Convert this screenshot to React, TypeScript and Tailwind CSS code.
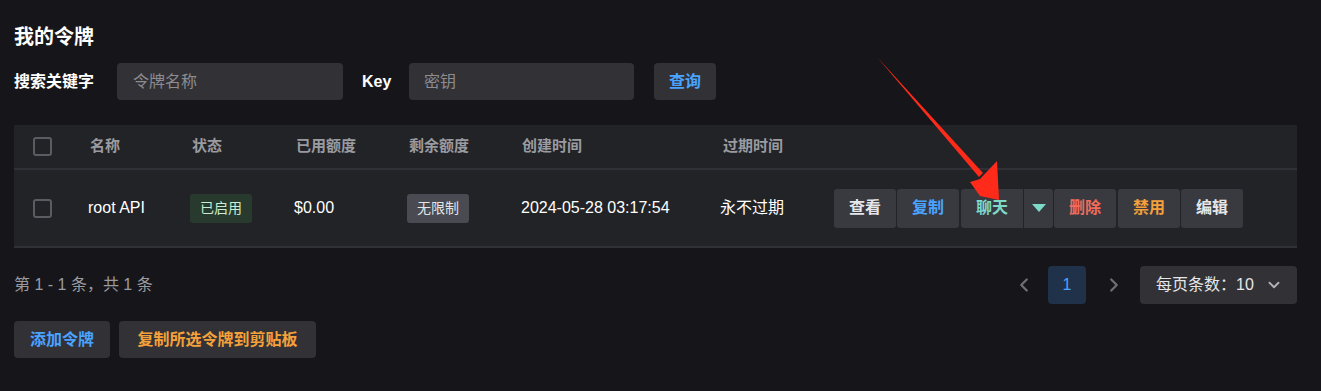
import { ChevronDown, ChevronLeft, ChevronRight } from "lucide-react";

const font = { fontFamily: '"Liberation Sans", "Noto Sans CJK SC", sans-serif' };

function Checkbox() {
  return <span className="block w-[19px] h-[19px] rounded-[3px] border-2 border-[#5b5c62]" />;
}

function ActionButton({ label, color, className = "" }: { label: string; color: string; className?: string }) {
  return (
    <button className={`h-[39px] px-[15px] rounded-[3px] bg-[#393a3f] font-bold text-[16px] ${color} ${className}`}>
      {label}
    </button>
  );
}

export default function App() {
  return (
    <div className="relative w-[1321px] h-[391px] bg-[#16161a] text-white overflow-hidden" style={font}>
      <div className="px-[14px] pt-[21px]">
        <h1 className="text-[20px] font-bold leading-[32px]">我的令牌</h1>

        <div className="mt-[10px] flex items-center h-[37px]">
          <span className="font-bold text-[16px] w-[103px]">搜索关键字</span>
          <div className="w-[226px] h-[37px] rounded-[4px] bg-[#323236] flex items-center px-[16px] text-[16px] text-[#8c8c91]">
            令牌名称
          </div>
          <span className="ml-[19px] font-bold text-[16px] w-[47px]">Key</span>
          <div className="w-[225px] h-[37px] rounded-[4px] bg-[#323236] flex items-center px-[15px] text-[16px] text-[#8c8c91]">
            密钥
          </div>
          <button className="ml-[20px] w-[62px] h-[37px] rounded-[4px] bg-[#323236] text-[16px] font-bold text-[#4aa3ff]">
            查询
          </button>
        </div>

        <div className="mt-[25px] w-[1283px] bg-[#222327]">
          <div className="flex items-center h-[45px] border-b-[2px] border-[#303137] text-[15px] font-bold text-[#9a9ba0]">
            <div className="w-[76px] pl-[19px]"><Checkbox /></div>
            <div className="w-[102px]">名称</div>
            <div className="w-[104px]">状态</div>
            <div className="w-[113px]">已用额度</div>
            <div className="w-[113px]">剩余额度</div>
            <div className="w-[201px]">创建时间</div>
            <div>过期时间</div>
          </div>
          <div className="flex items-center h-[78px] border-b-[2px] border-[#303137] text-[16px]">
            <div className="w-[74px] pl-[19px]"><Checkbox /></div>
            <div className="w-[102px]">root API</div>
            <div className="w-[104px]">
              <span className="inline-flex items-center h-[29px] px-[10px] rounded-[3px] bg-[#283a2e] text-[#c9ecd2] text-[14px]">已启用</span>
            </div>
            <div className="w-[113px]">$0.00</div>
            <div className="w-[114px]">
              <span className="inline-flex items-center h-[29px] px-[10px] rounded-[3px] bg-[#4a4b52] text-[#e4e4e7] text-[14px]">无限制</span>
            </div>
            <div className="w-[199px]">2024-05-28 03:17:54</div>
            <div className="w-[114px]">永不过期</div>
            <div className="flex gap-[1px]">
              <ActionButton label="查看" color="text-[#e6e6e9]" />
              <ActionButton label="复制" color="text-[#4aa3ff]" />
              <div className="flex gap-[1px] ml-[1px]">
                <ActionButton label="聊天" color="text-[#7dd9c8]" className="rounded-r-none" />
                <button className="h-[39px] w-[29px] rounded-r-[3px] bg-[#393a3f] flex items-center justify-center">
                  <span className="block w-0 h-0 border-l-[7px] border-r-[7px] border-t-[8px] border-l-transparent border-r-transparent border-t-[#7dd9c8]" />
                </button>
              </div>
              <ActionButton label="删除" color="text-[#f26b5b]" />
              <ActionButton label="禁用" color="text-[#f5a13b]" className="ml-[1px]" />
              <ActionButton label="编辑" color="text-[#e6e6e9]" />
            </div>
          </div>
        </div>

        <div className="mt-[18px] flex items-center justify-between w-[1283px] h-[38px]">
          <span className="text-[16px] text-[#9a9ba0]">第 1 - 1 条，共 1 条</span>
          <div className="flex items-center">
            <ChevronLeft className="w-[22px] h-[22px] text-[#6e6f75] mr-[13px]" strokeWidth={2.5} />
            <span className="w-[38px] h-[38px] rounded-[4px] bg-[#1f3249] flex items-center justify-center text-[16px] text-[#4aa3ff]">1</span>
            <ChevronRight className="w-[22px] h-[22px] text-[#6e6f75] ml-[17px] mr-[15px]" strokeWidth={2.5} />
            <div className="w-[157px] h-[38px] rounded-[4px] bg-[#323236] flex items-center pl-[16px] text-[16px] text-[#e6e6e9]">
              每页条数：10
              <ChevronDown className="ml-[11px] w-[18px] h-[18px] text-[#b0b1b6]" strokeWidth={2.5} />
            </div>
          </div>
        </div>

        <div className="mt-[17px] flex gap-[9px]">
          <button className="h-[37px] w-[96px] rounded-[4px] bg-[#323236] text-[16px] font-bold text-[#4aa3ff]">添加令牌</button>
          <button className="h-[37px] w-[197px] rounded-[4px] bg-[#323236] text-[16px] font-bold text-[#f5a13b]">复制所选令牌到剪贴板</button>
        </div>
      </div>

      {/* red annotation arrow */}
      <svg className="absolute left-0 top-0 pointer-events-none" width="1321" height="391">
        <polygon points="877,57 979,177 983,173" fill="#ff2a1a" />
        <polygon points="980,179 997,161 999,200 980,196 970,182" fill="#ff2a1a" />
      </svg>
    </div>
  );
}
